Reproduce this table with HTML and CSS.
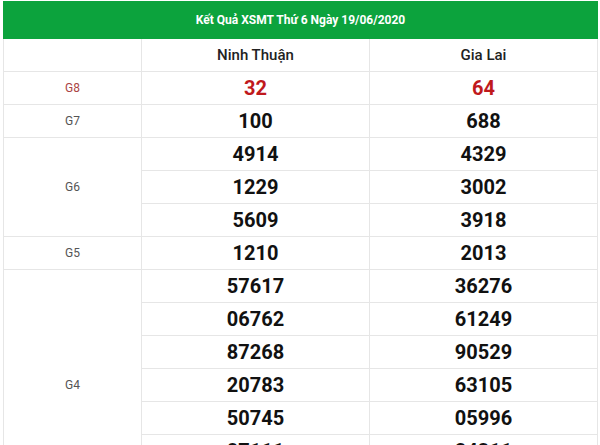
FILE: index.html
```html
<!DOCTYPE html>
<html lang="vi">
<head>
<meta charset="utf-8">
<link rel="stylesheet" href="styles.css">
</head>
<body>
<div class="wrap">
<table class="kq">
  <colgroup><col class="c1"><col class="c2"><col class="c3"></colgroup>
  <thead>
    <tr><th colspan="3" class="title">Kết Quả XSMT Thứ 6 Ngày 19/06/2020</th></tr>
    <tr class="prov"><td></td><td>Ninh Thuận</td><td>Gia Lai</td></tr>
  </thead>
  <tbody>
    <tr class="g8"><td class="lbl">G8</td><td class="num">32</td><td class="num">64</td></tr>
    <tr><td class="lbl">G7</td><td class="num">100</td><td class="num">688</td></tr>
    <tr><td class="lbl" rowspan="3">G6</td><td class="num">4914</td><td class="num">4329</td></tr>
    <tr><td class="num">1229</td><td class="num">3002</td></tr>
    <tr><td class="num">5609</td><td class="num">3918</td></tr>
    <tr><td class="lbl">G5</td><td class="num">1210</td><td class="num">2013</td></tr>
    <tr><td class="lbl" rowspan="7">G4</td><td class="num">57617</td><td class="num">36276</td></tr>
    <tr><td class="num">06762</td><td class="num">61249</td></tr>
    <tr><td class="num">87268</td><td class="num">90529</td></tr>
    <tr><td class="num">20783</td><td class="num">63105</td></tr>
    <tr><td class="num">50745</td><td class="num">05996</td></tr>
    <tr><td class="num">87111</td><td class="num">24311</td></tr>
    <tr><td class="num">19365</td><td class="num">70842</td></tr>
  </tbody>
</table>
</div>
</body>
</html>
```
FILE: styles.css
```css
html, body {
  margin: 0;
  padding: 0;
  background: #fff;
  overflow: hidden;
}
.wrap {
  padding: 1px 3px 0 3px;
}
.kq {
  width: 594px;
  border-collapse: collapse;
  table-layout: fixed;
  font-family: Roboto, "Liberation Sans", sans-serif;
}
.c1 { width: 138px; }
.c2 { width: 228px; }
.c3 { width: 228px; }
.kq td, .kq th {
  border: 1px solid #e6e6e6;
  text-align: center;
  vertical-align: middle;
  padding: 0;
  height: 32px;
}
.title {
  background: #0ca33d;
  color: #fff;
  font-size: 12px;
  font-weight: 700;
  height: 37px !important;
  border-color: #0ca33d !important;
  border-top: none !important;
}
.prov td {
  font-size: 15px;
  font-weight: 500;
  color: #222;
}
.lbl {
  font-size: 12px;
  color: #555;
}
.num {
  font-size: 20px;
  font-weight: 700;
  color: #111;
}
.g8 .num { color: #c0191c; }
.g8 .lbl { color: #a44; }
```
